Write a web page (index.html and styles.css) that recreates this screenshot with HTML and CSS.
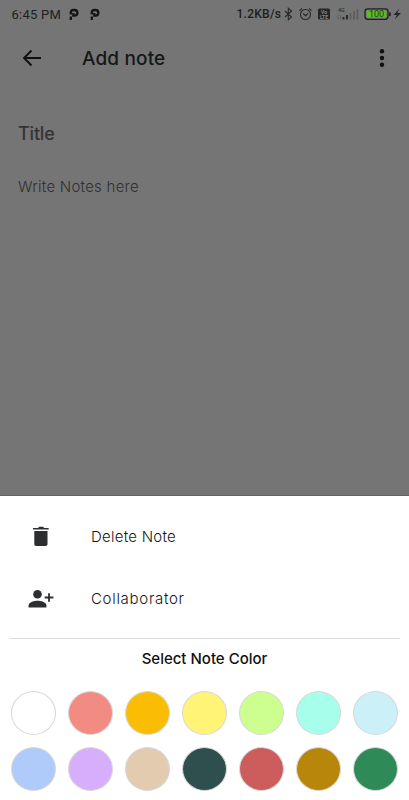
FILE: index.html
```html
<!DOCTYPE html>
<html lang="en">
<head>
    <meta charset="UTF-8">
    <meta name="viewport" content="width=device-width, initial-scale=1.0">
    <title>Add note</title>
    <link rel="stylesheet" href="styles.css">
</head>
<body>
    <div class="note">
        <div class="status-bar">
            <span class="time">6:45 PM</span>
            <svg class="app-icon" width="11" height="13" viewBox="0 0 11 13"><path d="M1.800 12V8.500M1.800 6.500V4.500Q1.800 2 4.300 2H5.500A2.800 2.800 0 0 1 5.500 7.700H4.300V5" /></svg>
            <svg class="app-icon second" width="11" height="13" viewBox="0 0 11 13"><path d="M1.800 12V8.500M1.800 6.500V4.500Q1.800 2 4.300 2H5.500A2.800 2.800 0 0 1 5.500 7.700H4.300V5" /></svg>
            <span class="speed">1.2KB/s</span>
            <svg class="status-icons" width="122" height="16" viewBox="0 0 122 16">
                <!-- bluetooth -->
                <path class="line" d="M1 5L7.500 11L4.300 13.800V2.200L7.500 5L1 11" />
                <!-- alarm -->
                <circle class="line" cx="21.500" cy="8.500" r="5" />
                <path class="line" d="M15.500 4.700L18 2.500M27.500 4.700L25 2.500M19.200 7.500L21.500 9.700L24 7.500" />
                <!-- volte -->
                <rect x="34" y="2.500" width="12" height="11" rx="1.500" />
                <text class="volte" x="40" y="7.700" text-anchor="middle">Vo</text>
                <text class="volte" x="40" y="12.500" text-anchor="middle">LTE</text>
                <!-- signal -->
                <text class="network" x="54" y="5.800">4G</text>
                <path class="faint" d="M54 9V13.500M56.500 9V13.500" />
                <path class="bars" d="M59.500 11V13.500M63 9V13.500" />
                <path class="bars faded" d="M66.500 7V13.500M70 5V13.500M73.500 3V13.500" />
                <!-- battery -->
                <rect class="battery" x="81" y="2.800" width="23" height="10.500" rx="2.800" />
                <rect class="charge" x="82.700" y="4.500" width="19.600" height="7.100" rx="1" />
                <text class="percent" x="92.500" y="11.200" text-anchor="middle">100</text>
                <rect x="105" y="6.300" width="1.800" height="4" rx=".7" />
                <path d="M115.500 2.500L109.500 9H113L110.500 13.500L117 7H113.300Z" />
            </svg>
        </div>
        <div class="app-bar">
            <svg class="back" width="20" height="18" viewBox="0 0 20 18"><path d="M19 9H2M9.500 1.500L2 9L9.500 16.500" /></svg>
            <h1>Add note</h1>
            <svg class="more" width="6" height="20" viewBox="0 0 6 20"><circle cx="3" cy="3.200" r="2.200" /><circle cx="3" cy="10" r="2.200" /><circle cx="3" cy="16.800" r="2.200" /></svg>
        </div>
        <div class="title">Title</div>
        <div class="content">Write Notes here</div>
    </div>

    <div class="sheet">
        <div class="option">
            <svg width="30" height="24" viewBox="0 0 30 24"><path d="M7 4H12L13.200 2.800H17L18.200 4H22.700V5.600H7ZM8.300 7H21.500V20.300Q21.500 22 19.800 22H10Q8.300 22 8.300 20.300Z" /></svg>
            <span class="delete">Delete Note</span>
        </div>
        <div class="option">
            <svg width="30" height="24" viewBox="0 0 30 24"><circle cx="11.500" cy="8.200" r="4.300" /><path d="M2.600 21.500V19.200C2.600 16 8.500 14.700 11.500 14.700S20.400 16 20.400 19.200V21.500Z" /><path class="plus" d="M23 7.200V15.800M18.700 11.500H27.400" /></svg>
            <span class="collab">Collaborator</span>
        </div>
        <div class="colors">
            <h2>Select Note Color</h2>
            <div class="swatches">
                <span class="white"></span>
                <span class="salmon"></span>
                <span class="amber"></span>
                <span class="yellow"></span>
                <span class="lime"></span>
                <span class="aqua"></span>
                <span class="sky"></span>
                <span class="blue"></span>
                <span class="purple"></span>
                <span class="tan"></span>
                <span class="slate"></span>
                <span class="red"></span>
                <span class="gold"></span>
                <span class="green"></span>
            </div>
        </div>
    </div>
</body>
</html>
```

FILE: styles.css
```css
* {
    box-sizing: border-box;
}
body {
    margin: 0;
    height: 800px;
    overflow: hidden;
    background: #fff;
    font-family: Inter, "Liberation Sans", sans-serif;
    color: #161718;
}
.note {
    height: 496px;
    background: #757575;
    border-bottom: 1px solid #626262;
}
.status-bar {
    display: flex;
    align-items: center;
    height: 28px;
    padding-left: 11.5px;
    font-family: Roboto, sans-serif;
    font-size: 13px;
    color: #202020;
}
.time {
    width: 57px;
    letter-spacing: 0.25px;
    white-space: nowrap;
}
.app-icon {
    flex: none;
    fill: none;
    stroke: #141414;
    stroke-width: 2.3;
}
.second {
    margin-left: 10px;
}
.speed {
    width: 46px;
    margin-left: 136px;
    font-size: 12px;
    font-weight: 500;
    letter-spacing: 0.25px;
    white-space: nowrap;
}
.time,
.speed {
    flex: none;
}
.status-icons {
    flex: none;
    margin-left: 1px;
    fill: #252525;
}
.line {
    fill: none;
    stroke: #292929;
    stroke-width: 1.1;
}
.volte {
    font-size: 5px;
    font-weight: 700;
    fill: #858585;
}
.network {
    font-size: 5.5px;
}
.faint {
    stroke: #5c5c5c;
    stroke-width: 1;
}
.bars {
    stroke: #292929;
    stroke-width: 2;
}
.bars.faded {
    stroke: #5c5c5c;
    stroke-width: 1.7;
}
.battery {
    fill: none;
    stroke: #202020;
    stroke-width: 1.3;
}
.charge {
    fill: #5cbe22;
}
.percent {
    font-size: 9px;
    fill: #223b15;
}
.app-bar {
    display: flex;
    align-items: center;
    height: 60px;
    padding: 0 24px 0 22px;
}
.back {
    fill: none;
    stroke: #101010;
    stroke-width: 1.9;
}
h1 {
    margin: 0 auto 0 40px;
    font-size: 19px;
    font-weight: 500;
    letter-spacing: 0.15px;
}
.more {
    fill: #101010;
}
.title {
    margin: 34px 0 0 18px;
    font-size: 18px;
    font-weight: 500;
    line-height: 24px;
    color: #343434;
    letter-spacing: -0.2px;
}
.content {
    margin: 31px 0 0 18px;
    font-size: 15px;
    font-weight: 300;
    line-height: 20px;
    color: #303030;
    letter-spacing: 0.25px;
}
.sheet {
    height: 304px;
    padding: 9px 9px 0;
    background: #fff;
}
.option {
    display: flex;
    align-items: center;
    height: 62px;
    padding-left: 17px;
    font-size: 15px;
    font-weight: 300;
}
.option svg {
    margin-right: 35px;
    fill: #2d2e30;
}
.option .plus {
    fill: none;
    stroke: #2d2e30;
    stroke-width: 1.8;
}
.delete {
    letter-spacing: 0.25px;
}
.collab {
    letter-spacing: 0.7px;
}
.colors {
    margin-top: 9px;
    border-top: 1px solid #dedede;
}
h2 {
    margin: 10px 0 22px;
    font-size: 15px;
    font-weight: 500;
    line-height: 20px;
    text-align: center;
    letter-spacing: 0;
    color: #111;
}
.swatches {
    display: grid;
    grid-template-columns: repeat(7, 45px);
    justify-content: space-between;
    row-gap: 12px;
    padding: 0 2px;
}
.swatches span {
    height: 44px;
    border: 1px solid #d8d8d8;
    border-radius: 50%;
}
.white {
    background: #fff;
}
.salmon {
    background: #f28b82;
}
.amber {
    background: #fbbc04;
}
.yellow {
    background: #fff475;
}
.lime {
    background: #ccff90;
}
.aqua {
    background: #a7ffeb;
}
.sky {
    background: #cbf0f8;
}
.blue {
    background: #aecbfa;
}
.purple {
    background: #d7aefb;
}
.tan {
    background: #e3cbb0;
}
.slate {
    background: #2f4f4f;
}
.red {
    background: #cd5c5c;
}
.gold {
    background: #b8860b;
}
.green {
    background: #2e8b57;
}
```
